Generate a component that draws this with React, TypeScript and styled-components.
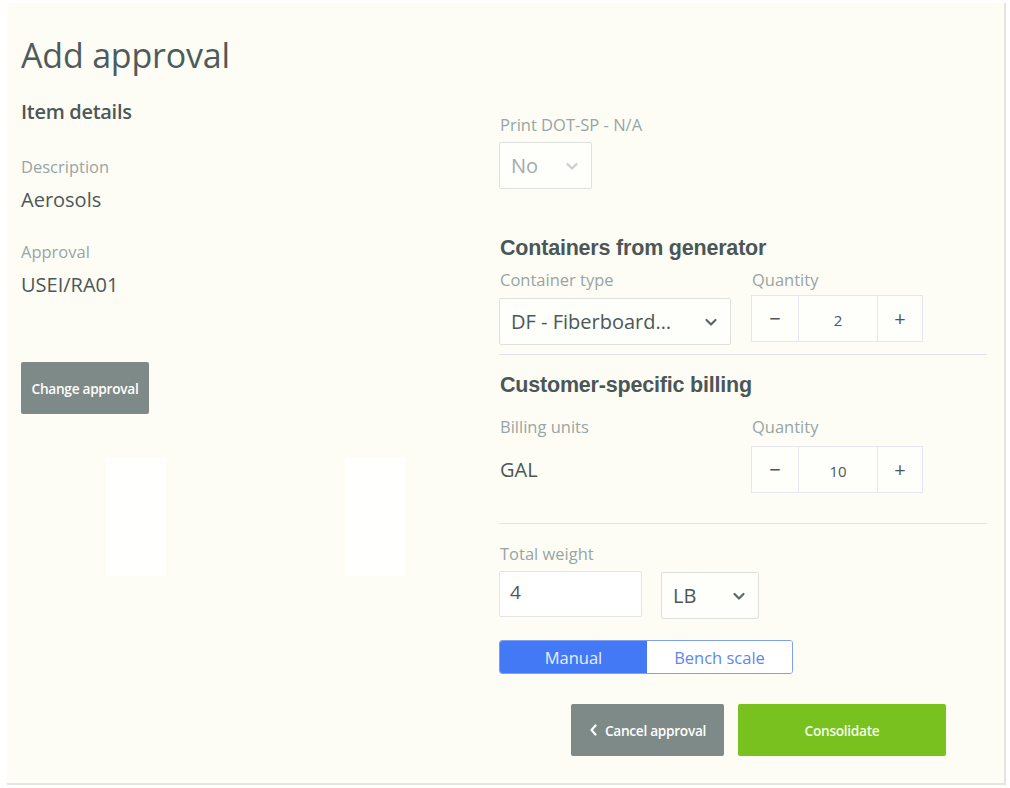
import React from "react";
import styled, { createGlobalStyle } from "styled-components";

const Global = createGlobalStyle`
  html, body { margin: 0; padding: 0; background: #ffffff; }
  body { font-family: "Open Sans", "Noto Sans", sans-serif; }
  * { box-sizing: border-box; }
`;

const Panel = styled.div`
  margin: 3px 0 0 7px;
  width: 999px;
  height: 782px;
  background: #fdfdf6;
  border-right: 2px solid #e4e6de;
  border-bottom: 2px solid #e4e6de;
  padding: 30px 0 0 14px;
  color: #4b5858;
`;

const Title = styled.h1`
  margin: 0;
  font-size: 34px;
  font-weight: 400;
  line-height: 44px;
  color: #4f5b5b;
  letter-spacing: -0.2px;
`;

const Columns = styled.div`
  display: grid;
  grid-template-columns: 478px 488px;
`;

const LeftCol = styled.div`
  display: flex;
  flex-direction: column;
`;

const SectionTitle = styled.h2`
  margin: 22px 0 0;
  font-size: 20px;
  font-weight: 600;
  line-height: 26px;
  color: #4b5858;
  letter-spacing: -0.3px;
`;

const Label = styled.div<{ $mt?: number }>`
  margin-top: ${(p) => p.$mt ?? 0}px;
  font-size: 16.5px;
  line-height: 22px;
  color: #97a5a5;
`;

const Value = styled.div<{ $mt?: number }>`
  margin-top: ${(p) => p.$mt ?? 0}px;
  font-size: 20px;
  line-height: 26px;
  color: #4b5858;
`;

const Slot = styled.div<{ $mt: number }>`
  margin-top: ${(p) => p.$mt}px;
`;

const GreyButton = styled.button<{ $w: number }>`
  width: ${(p) => p.$w}px;
  height: 52px;
  border: none;
  border-radius: 2px;
  background: #7e8a87;
  color: #ffffff;
  font-family: "Open Sans", sans-serif;
  font-size: 13.7px;
  font-weight: 600;
  letter-spacing: -0.3px;
  display: flex;
  align-items: center;
  justify-content: center;
  gap: 7px;
  padding: 0;
`;

const GhostRow = styled.div`
  margin-top: 44px;
  display: flex;
  gap: 179px;
  padding-left: 85px;
`;

const Ghost = styled.div`
  width: 60px;
  height: 118px;
  background: #fffffd;
`;

const RightCol = styled.div`
  display: flex;
  flex-direction: column;
  padding-top: 37px;
`;

const Heading = styled.h3<{ $mt: number }>`
  margin: ${(p) => p.$mt}px 0 0 1px;
  font-family: "Liberation Sans", Arial, sans-serif;
  font-size: 21.5px;
  font-weight: 700;
  line-height: 26px;
  color: #4b5656;
  letter-spacing: -0.2px;
`;

const SelectBox = styled.div<{ $w: number; $muted?: boolean }>`
  width: ${(p) => p.$w}px;
  height: 47px;
  border: 1px solid #dfe1dc;
  border-radius: 2px;
  background: #fefefb;
  display: flex;
  align-items: center;
  justify-content: space-between;
  padding: 0 12px 0 11px;
  font-size: 20px;
  color: ${(p) => (p.$muted ? "#a3abab" : "#4b5858")};
  white-space: nowrap;
`;

const Chevron = ({ color }: { color: string }) => (
  <svg width="14" height="14" viewBox="0 0 14 14">
    <path d="M2.5 5 L7 9.5 L11.5 5" fill="none" stroke={color} strokeWidth="2.2" strokeLinecap="round" strokeLinejoin="round" />
  </svg>
);

const PairRow = styled.div<{ $mt: number }>`
  margin-top: ${(p) => p.$mt}px;
  display: grid;
  grid-template-columns: 252px 172px;
`;

const Field = styled.div`
  display: flex;
  flex-direction: column;
  & > ${Label}, & > ${Value} {
    padding-left: 1px;
  }
`;

const Stepper = styled.div`
  width: 172px;
  height: 47px;
  border: 1px solid #e6e5f0;
  display: grid;
  grid-template-columns: 46px 80px 1fr;
  background: #fefefb;
`;

const StepCell = styled.div<{ $mid?: boolean }>`
  display: flex;
  align-items: center;
  justify-content: center;
  font-size: ${(p) => (p.$mid ? "15px" : "20px")};
  color: #4b5858;
  border-left: ${(p) => (p.$mid ? "1px solid #e6e5f0" : "none")};
  border-right: ${(p) => (p.$mid ? "1px solid #e6e5f0" : "none")};
  padding-top: ${(p) => (p.$mid ? "2px" : "0")};
`;

const Divider = styled.div<{ $mt: number }>`
  margin-top: ${(p) => p.$mt}px;
  width: 488px;
  height: 1px;
  background: #e2e2ee;
`;

const WeightRow = styled.div`
  margin-top: 6px;
  display: flex;
  gap: 19px;
  align-items: flex-start;
`;

const TextInput = styled.div`
  width: 143px;
  height: 46px;
  border: 1px solid #e3e5e0;
  border-radius: 2px;
  background: #ffffff;
  display: flex;
  align-items: center;
  padding: 0 10px 4px;
  font-size: 19px;
  color: #4b5858;
`;

const Segmented = styled.div`
  margin-top: 21px;
  width: 294px;
  height: 34px;
  display: grid;
  grid-template-columns: 147px 1fr;
  border: 1px solid #7f9ff3;
  border-radius: 3px;
  overflow: hidden;
`;

const Segment = styled.div<{ $active?: boolean }>`
  display: flex;
  align-items: center;
  justify-content: center;
  font-size: 16.5px;
  background: ${(p) => (p.$active ? "#4479f6" : "#ffffff")};
  color: ${(p) => (p.$active ? "#e8eeff" : "#5d87ee")};
`;

const Actions = styled.div`
  margin-top: 30px;
  padding-left: 72px;
  display: flex;
  gap: 14px;
`;

const GreenButton = styled.button`
  width: 208px;
  height: 52px;
  border: none;
  border-radius: 2px;
  background: #78c11f;
  color: #f4fbe9;
  font-family: "Open Sans", sans-serif;
  font-size: 13.7px;
  font-weight: 600;
  letter-spacing: -0.3px;
  padding: 0;
`;

export default function App() {
  return (
    <>
      <Global />
      <Panel>
        <Title>Add approval</Title>
        <Columns>
          <LeftCol>
            <SectionTitle>Item details</SectionTitle>
            <Label $mt={31}>Description</Label>
            <Value $mt={9}>Aerosols</Value>
            <Label $mt={28}>Approval</Label>
            <Value $mt={9}>USEI/RA01</Value>
            <Slot $mt={64}>
              <GreyButton $w={128}>Change approval</GreyButton>
            </Slot>
            <GhostRow>
              <Ghost />
              <Ghost />
            </GhostRow>
          </LeftCol>
          <RightCol>
            <Field>
              <Label>Print DOT-SP - N/A</Label>
            </Field>
            <Slot $mt={6}>
              <SelectBox $w={93} $muted>
                No
                <Chevron color="#c9cfcf" />
              </SelectBox>
            </Slot>
            <Heading $mt={46}>Containers from generator</Heading>
            <PairRow $mt={8}>
              <Field>
                <Label>Container type</Label>
                <Slot $mt={7}>
                  <SelectBox $w={232}>
                    DF - Fiberboard…
                    <Chevron color="#5c6868" />
                  </SelectBox>
                </Slot>
              </Field>
              <Field>
                <Label>Quantity</Label>
                <Slot $mt={4}>
                  <Stepper>
                    <StepCell>−</StepCell>
                    <StepCell $mid>2</StepCell>
                    <StepCell>+</StepCell>
                  </Stepper>
                </Slot>
              </Field>
            </PairRow>
            <Divider $mt={9} />
            <Heading $mt={17}>Customer-specific billing</Heading>
            <PairRow $mt={18}>
              <Field>
                <Label>Billing units</Label>
                <Value $mt={19}>GAL</Value>
              </Field>
              <Field>
                <Label>Quantity</Label>
                <Slot $mt={8}>
                  <Stepper>
                    <StepCell>−</StepCell>
                    <StepCell $mid>10</StepCell>
                    <StepCell>+</StepCell>
                  </Stepper>
                </Slot>
              </Field>
            </PairRow>
            <Divider $mt={30} />
            <Field>
              <Label $mt={19}>Total weight</Label>
            </Field>
            <WeightRow>
              <TextInput>4</TextInput>
              <Slot $mt={1}>
                <SelectBox $w={98}>
                  LB
                  <Chevron color="#5c6868" />
                </SelectBox>
              </Slot>
            </WeightRow>
            <Segmented>
              <Segment $active>Manual</Segment>
              <Segment>Bench scale</Segment>
            </Segmented>
            <Actions>
              <GreyButton $w={153}>
                <svg width="9" height="12" viewBox="0 0 9 12">
                  <path d="M6.5 1.5 L2.5 6 L6.5 10.5" fill="none" stroke="#ffffff" strokeWidth="2.2" strokeLinecap="round" strokeLinejoin="round" />
                </svg>
                Cancel approval
              </GreyButton>
              <GreenButton>Consolidate</GreenButton>
            </Actions>
          </RightCol>
        </Columns>
      </Panel>
    </>
  );
}
